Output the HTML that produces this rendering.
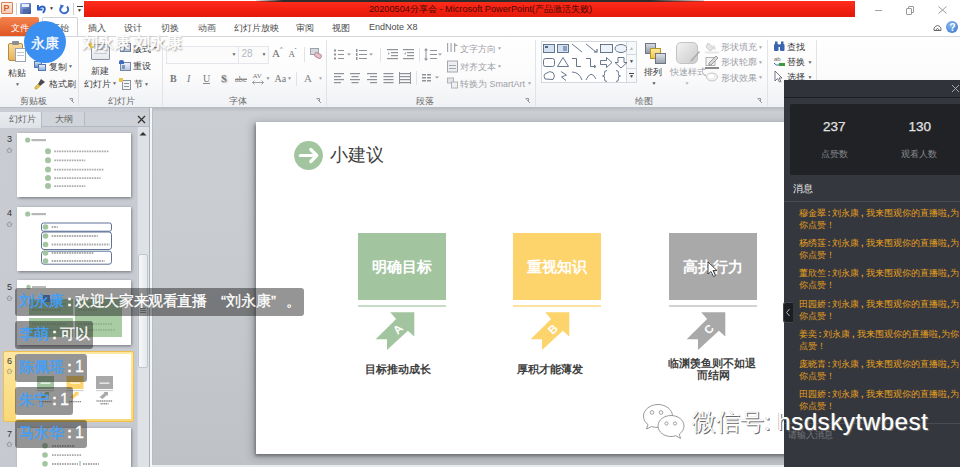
<!DOCTYPE html>
<html><head><meta charset="utf-8">
<style>
*{margin:0;padding:0;box-sizing:border-box}
html,body{width:960px;height:467px;overflow:hidden;background:#fff;font-family:"Liberation Sans",sans-serif;position:relative}
.a{position:absolute}
.t{position:absolute;white-space:nowrap;line-height:1}
.s9{font-size:9px}
.tab{font-size:9px;color:#4b4b4b;top:23.5px}
.sep{top:40px;width:1px;height:66px;background:#e0e3e7}
.gl{font-size:9px;color:#6a6a6a;top:97px}
.rl{font-size:9px;color:#3c3c3c}
.dim{color:#9ea1a6}
.dd{font-size:5px;color:#666}
.thumb{position:absolute;left:17px;width:114px;background:#fff;box-shadow:0.5px 1px 3px rgba(0,0,0,.45)}
.num{font-size:9px;color:#333;left:7px}
.star{font-size:8px;color:#555;left:6px}
.bub{position:absolute;left:15px;height:27.5px;-webkit-text-stroke-width:0.35px;background:rgba(30,30,30,.47);border-radius:3px;font-size:15px;color:#fff;line-height:26.3px;padding-left:4px;white-space:nowrap;text-shadow:0 0 1px rgba(0,0,0,.35)}
.bub b{font-weight:normal;color:#3fa0fa;text-shadow:none}
.bub u{text-decoration:none;font-size:16px}
.bub i{font-style:normal;word-spacing:-1.2px;font-weight:bold}
.fw{display:inline-block;width:15px}
.msg{position:absolute;left:15px;width:165px;font-size:8.9px;line-height:12px;color:#e9a11e}
.p{display:inline-block;width:6px;text-align:center;font-weight:bold}
</style></head><body>

<!-- ===== Title bar ===== -->
<div class="a" style="left:1px;top:2px;width:11.5px;height:12px;background:linear-gradient(#fdebdf,#f6cdb2);border:1px solid #d9805a;border-radius:1px"></div>
<div class="t" style="left:3.5px;top:3.5px;font-size:9px;font-weight:bold;color:#d2602a">P</div>
<div class="a" style="left:16px;top:3px;width:1px;height:12px;background:#cfcfcf"></div>
<div class="a" style="left:20px;top:3px;width:11px;height:11px;background:linear-gradient(135deg,#9fb6ea,#2c4a9c);border-radius:1px"></div>
<div class="a" style="left:22px;top:4px;width:7px;height:3px;background:#e8edf7"></div>
<div class="a" style="left:23px;top:9px;width:5px;height:5px;background:#506aa8"></div>
<svg class="a" style="left:35px;top:3px" width="12" height="11"><path d="M3 2V6.5H7.5" fill="none" stroke="#2f63c6" stroke-width="2"/><path d="M3.5 6Q6 2.5 9 4Q11 6 8 10" fill="none" stroke="#2f63c6" stroke-width="2"/></svg>
<div class="t" style="left:49px;top:6px;font-size:5px;color:#333">▼</div>
<svg class="a" style="left:58px;top:3px" width="12" height="12"><path d="M9 3.5A4 4 0 1 1 4 3" fill="none" stroke="#3a6fd0" stroke-width="2"/><path d="M2 1.5L6 2.5L3.5 6Z" fill="#3a6fd0"/></svg>
<div class="a" style="left:73px;top:3px;width:1px;height:12px;background:#cfcfcf"></div>
<div class="a" style="left:77px;top:6px;width:6px;height:1px;background:#333"></div>
<div class="t" style="left:77px;top:8px;font-size:5px;color:#333">▼</div>
<div class="a" style="left:84px;top:1px;width:771px;height:16px;background:linear-gradient(#ff2d1c,#f01e0f 60%,#e21a0b)"></div>
<div class="a" style="left:256px;top:0;width:448px;height:2px;background:linear-gradient(90deg,rgba(50,40,40,.1),#2e2b2b 6%,#2e2b2b 88%,rgba(50,40,40,.2))"></div>
<div class="t" style="left:369px;top:5px;font-size:9.2px;color:#4d0b04">20200504分享会 - Microsoft PowerPoint(产品激活失败)</div>
<div class="a" style="left:875px;top:10px;width:7px;height:1px;background:#a0a0a0"></div>
<div class="a" style="left:908px;top:6px;width:6px;height:7px;border:1px solid #9a9a9a;border-radius:1px"></div>
<div class="a" style="left:906px;top:8px;width:6px;height:7px;border:1px solid #9a9a9a;background:#fff;border-radius:1px"></div>
<svg class="a" style="left:938px;top:6px" width="9" height="8"><path d="M0.5 0.5L8.5 7.5M8.5 0.5L0.5 7.5" stroke="#8f8f8f" stroke-width="0.9"/></svg>

<!-- ===== Tabs ===== -->
<div class="a" style="left:0;top:17px;width:39px;height:20px;background:linear-gradient(#f3834f,#df5420);border-radius:2px 2px 0 0"></div>
<div class="t" style="left:11px;top:23.5px;font-size:9px;color:#fff">文件</div>
<div class="a" style="left:42px;top:17px;width:36px;height:21px;background:#fff;border:1px solid #cfd3d8;border-bottom:none;border-radius:2px 2px 0 0"></div>
<div class="t tab" style="left:51px">开始</div>
<div class="t tab" style="left:87.5px">插入</div>
<div class="t tab" style="left:124px">设计</div>
<div class="t tab" style="left:160.5px">切换</div>
<div class="t tab" style="left:197.5px">动画</div>
<div class="t tab" style="left:234px">幻灯片放映</div>
<div class="t tab" style="left:296px">审阅</div>
<div class="t tab" style="left:332px">视图</div>
<div class="t tab" style="left:369px;top:23px;font-size:9px">EndNote X8</div>
<svg class="a" style="left:933px;top:23.5px" width="9" height="8"><path d="M1 6.5Q0.5 2.5 4.5 1.5Q8.5 2.5 8 6.5Z" fill="none" stroke="#666" stroke-width="1"/><path d="M2.5 6.3L4.5 4.3L6.5 6.3" fill="none" stroke="#666" stroke-width="1"/></svg>
<div class="a" style="left:946px;top:21px;width:12px;height:12px;border-radius:50%;background:radial-gradient(circle at 40% 35%,#8cbcf2,#2f6ec9)"></div>
<div class="t" style="left:949.5px;top:22.5px;font-size:10px;font-weight:bold;color:#fff">?</div>

<!-- ===== Ribbon ===== -->
<div class="a" style="left:0;top:36px;width:960px;height:72px;background:linear-gradient(#ffffff,#fbfbfc 55%,#eff1f4);border-top:1.5px solid #d3d7dc;border-bottom:1px solid #b6bcc4"></div>
<div class="a sep" style="left:78px"></div>
<div class="a sep" style="left:162px"></div>
<div class="a sep" style="left:326px"></div>
<div class="a sep" style="left:535px"></div>
<div class="a sep" style="left:767px"></div>
<div class="a sep" style="left:816px"></div>
<div class="t gl" style="left:19.5px">剪贴板</div>
<div class="t gl" style="left:108px">幻灯片</div>
<div class="t gl" style="left:229px">字体</div>
<div class="t gl" style="left:416px">段落</div>
<div class="t gl" style="left:635px">绘图</div>
<svg class="a" style="left:69px;top:98px" width="6" height="6"><path d="M0.5 0.5H3.5V3.5" fill="none" stroke="#999" stroke-width="1"/><path d="M1.5 1.5L5 5" stroke="#999"/></svg>
<svg class="a" style="left:316px;top:98px" width="6" height="6"><path d="M0.5 0.5H3.5V3.5" fill="none" stroke="#999" stroke-width="1"/><path d="M1.5 1.5L5 5" stroke="#999"/></svg>
<svg class="a" style="left:525px;top:98px" width="6" height="6"><path d="M0.5 0.5H3.5V3.5" fill="none" stroke="#999" stroke-width="1"/><path d="M1.5 1.5L5 5" stroke="#999"/></svg>
<svg class="a" style="left:757px;top:98px" width="6" height="6"><path d="M0.5 0.5H3.5V3.5" fill="none" stroke="#999" stroke-width="1"/><path d="M1.5 1.5L5 5" stroke="#999"/></svg>

<!-- clipboard -->
<div class="a" style="left:8px;top:43px;width:15px;height:18px;background:linear-gradient(#f9dca0,#e8b25a);border:1px solid #b98a3a;border-radius:2px"></div>
<div class="a" style="left:12px;top:41px;width:7px;height:4px;background:#8a8f96;border-radius:1px"></div>
<div class="a" style="left:15px;top:48px;width:11px;height:14px;background:#fff;border:1px solid #9aa3ad"></div>
<div class="a" style="left:17px;top:52px;width:7px;height:1px;background:#c0c5cb"></div>
<div class="a" style="left:17px;top:55px;width:7px;height:1px;background:#c0c5cb"></div>
<div class="t rl" style="left:8px;top:68.8px">粘贴</div>
<div class="t dd" style="left:15px;top:81.5px">▼</div>
<div class="a" style="left:34px;top:61px;width:8px;height:7px;background:linear-gradient(#cfe0f5,#6d93cc);border:1px solid #5577aa"></div>
<div class="a" style="left:38px;top:64px;width:8px;height:7px;background:linear-gradient(#e6effa,#8fb0dd);border:1px solid #5577aa"></div>
<div class="t rl" style="left:48.5px;top:62.9px">复制</div>
<div class="t dd" style="left:68px;top:64px">▼</div>
<svg class="a" style="left:34px;top:78px" width="12" height="12"><path d="M7 1L11 4L6 8L4 6Z" fill="#4b4b4b"/><path d="M4 6L6 8L3 11L1 11L1 9Z" fill="#e7c34a" stroke="#b8952a" stroke-width=".6"/></svg>
<div class="t rl" style="left:48.5px;top:80.2px">格式刷</div>

<!-- slides group -->
<div class="a" style="left:91px;top:44px;width:19px;height:16px;background:linear-gradient(#fff,#e4e8ec);border:1px solid #8d96a0;border-radius:1px"></div><div class="a" style="left:92px;top:45px;width:17px;height:3px;background:#c7d3e6"></div>
<div class="a" style="left:94px;top:48px;width:13px;height:2px;background:#b5bcc5"></div>
<div class="a" style="left:94px;top:53px;width:13px;height:1px;background:#c5cad1"></div>
<div class="a" style="left:89px;top:43px;width:5px;height:5px;background:#f2c94c;transform:rotate(45deg)"></div>
<div class="t rl" style="left:90.5px;top:66.5px">新建</div>
<div class="t rl" style="left:84px;top:79.7px">幻灯片</div>
<div class="t dd" style="left:112px;top:81px">▼</div>
<div class="a" style="left:120px;top:43px;width:11px;height:9px;background:linear-gradient(#eef2f8,#b9c7dc);border:1px solid #6f86ad"></div><div class="a" style="left:122px;top:45px;width:3px;height:5px;background:#7f95bb"></div>
<div class="t rl" style="left:133px;top:44.7px">版式</div>
<div class="t dd" style="left:153px;top:46px">▼</div>
<div class="a" style="left:120px;top:62px;width:11px;height:9px;background:linear-gradient(#eef2f8,#b9c7dc);border:1px solid #6f86ad"></div><div class="a" style="left:122px;top:65px;width:3px;height:4px;background:#7f95bb"></div>
<div class="a" style="left:119px;top:60px;width:5px;height:4px;background:#3d6bbf;border-radius:2px 2px 0 0"></div>
<div class="t rl" style="left:133px;top:62px">重设</div>
<div class="a" style="left:122px;top:80px;width:9px;height:10px;background:#f3f4f6;border:1px solid #8a929c"></div>
<div class="a" style="left:124px;top:83px;width:5px;height:1px;background:#8a929c"></div>
<div class="a" style="left:124px;top:86px;width:5px;height:1px;background:#8a929c"></div>
<div class="a" style="left:119px;top:78px;width:4px;height:4px;background:#e9c64a"></div>
<div class="t rl" style="left:133.5px;top:80px">节</div>
<div class="t dd" style="left:144px;top:82px">▼</div>

<!-- font group -->
<div class="a" style="left:166px;top:46px;width:73px;height:18px;background:#fbfbfc;border:1px solid #e3e6ea"></div>
<div class="t dd" style="left:231.5px;top:51.5px">▼</div>
<div class="a" style="left:238px;top:46px;width:31px;height:18px;background:#fbfbfc;border:1px solid #e3e6ea"></div>
<div class="t" style="left:241.5px;top:49px;font-size:10px;color:#b4b8bd">28</div>
<div class="t dd" style="left:261.5px;top:51.5px">▼</div>
<div class="t" style="left:272px;top:48px;font-size:11px;font-family:'Liberation Serif',serif;color:#707070">A</div>
<div class="t" style="left:280px;top:46px;font-size:6px;color:#707070">^</div>
<div class="t" style="left:288.5px;top:50px;font-size:9px;font-family:'Liberation Serif',serif;color:#707070">A</div>
<div class="t" style="left:294.5px;top:47px;font-size:6px;color:#707070">ˇ</div>
<div class="a" style="left:304px;top:47px;width:1px;height:15px;background:#dfe2e6"></div>
<div class="a" style="left:310px;top:48px;width:9px;height:7px;background:#d5d9de;border:1px solid #9aa2ac"></div>
<div class="a" style="left:314px;top:53px;width:8px;height:5px;background:#e7c0ca;border:1px solid #b9909a;border-radius:2px;transform:rotate(30deg)"></div>
<div class="t" style="left:170px;top:73.5px;font-size:10px;font-weight:bold;font-family:'Liberation Serif',serif;color:#777">B</div>
<div class="t" style="left:187px;top:73.5px;font-size:10px;font-style:italic;font-family:'Liberation Serif',serif;color:#777">I</div>
<div class="t" style="left:203px;top:73.5px;font-size:10px;font-family:'Liberation Serif',serif;color:#777">U</div>
<div class="a" style="left:203px;top:83px;width:7px;height:1px;background:#888"></div>
<div class="t" style="left:221px;top:73.5px;font-size:10px;font-weight:bold;font-family:'Liberation Serif',serif;color:#777;text-shadow:1px 1px 1px #999">S</div>
<div class="t" style="left:235px;top:74.5px;font-size:8.5px;font-family:'Liberation Serif',serif;color:#777">abc</div>
<div class="a" style="left:235px;top:79px;width:12px;height:1px;background:#888"></div>
<div class="t" style="left:252.5px;top:72.5px;font-size:7px;font-family:'Liberation Serif',serif;color:#777">AV</div>
<svg class="a" style="left:252px;top:80px" width="12" height="5"><path d="M0.5 2.5H11.5M0.5 2.5L2.5 0.5M0.5 2.5L2.5 4.5M11.5 2.5L9.5 0.5M11.5 2.5L9.5 4.5" stroke="#888" stroke-width=".8" fill="none"/></svg>
<div class="t dd" style="left:265.5px;top:76px;color:#999">▼</div>
<div class="t" style="left:274.5px;top:73.5px;font-size:10px;font-family:'Liberation Serif',serif;color:#777">Aa</div>
<div class="t dd" style="left:287px;top:76px;color:#999">▼</div>
<div class="a" style="left:296px;top:72px;width:1px;height:14px;background:#dfe2e6"></div>
<div class="t" style="left:304px;top:72.5px;font-size:11px;font-family:'Liberation Serif',serif;color:#8a8a8a">A</div>
<div class="t dd" style="left:318px;top:76px;color:#aaa">▼</div>

<!-- paragraph group -->
<svg class="a" style="left:333px;top:48px" width="112" height="40">
 <g fill="#8f9298">
  <rect x="1" y="1.5" width="2" height="2"/><rect x="5" y="2" width="6" height="1"/>
  <rect x="1" y="5.5" width="2" height="2"/><rect x="5" y="6" width="6" height="1"/>
  <rect x="1" y="9.5" width="2" height="2"/><rect x="5" y="10" width="6" height="1"/>
  <rect x="23" y="1" width="1.5" height="3"/><rect x="26" y="2" width="8" height="1"/>
  <rect x="23" y="5" width="1.5" height="3"/><rect x="26" y="6" width="8" height="1"/>
  <rect x="23" y="9" width="1.5" height="3"/><rect x="26" y="10" width="8" height="1"/>
  <rect x="54" y="1" width="11" height="1.2"/><rect x="58" y="4" width="7" height="1.2"/><rect x="58" y="7" width="7" height="1.2"/><rect x="54" y="10" width="11" height="1.2"/>
  <rect x="70" y="1" width="11" height="1.2"/><rect x="74" y="4" width="7" height="1.2"/><rect x="74" y="7" width="7" height="1.2"/><rect x="70" y="10" width="11" height="1.2"/>
  <rect x="97" y="2" width="7" height="1"/><rect x="97" y="6" width="7" height="1"/><rect x="97" y="10" width="7" height="1"/>
  <path d="M93 0L95 2.5H91Z M93 13L95 10.5H91Z"/><rect x="92.5" y="2" width="1" height="9"/>
 </g>
 <g fill="#b0b3b8"><path d="M55 4L57 5.5L55 7Z"/><path d="M71 5.5L73 4V7Z"/></g>
 <g fill="#999" font-size="5"><path d="M14 5.5H18L16 7.5Z"/><path d="M36 5.5H40L38 7.5Z"/><path d="M105 5.5H109L107 7.5Z"/></g>
 <rect x="47" y="0" width="1" height="14" fill="#dfe2e6"/><rect x="86" y="0" width="1" height="14" fill="#dfe2e6"/>
 <g fill="#8f9298">
  <rect x="1" y="25" width="10" height="1.2"/><rect x="1" y="28" width="7" height="1.2"/><rect x="1" y="31" width="10" height="1.2"/><rect x="1" y="34" width="7" height="1.2"/>
  <rect x="17" y="25" width="10" height="1.2"/><rect x="18.5" y="28" width="7" height="1.2"/><rect x="17" y="31" width="10" height="1.2"/><rect x="18.5" y="34" width="7" height="1.2"/>
  <rect x="34" y="25" width="10" height="1.2"/><rect x="37" y="28" width="7" height="1.2"/><rect x="34" y="31" width="10" height="1.2"/><rect x="37" y="34" width="7" height="1.2"/>
  <rect x="50.5" y="25" width="10" height="1.2"/><rect x="50.5" y="28" width="10" height="1.2"/><rect x="50.5" y="31" width="10" height="1.2"/><rect x="50.5" y="34" width="10" height="1.2"/>
  <rect x="66" y="25" width="12" height="1.2"/><rect x="66" y="28" width="12" height="1.2"/><rect x="66" y="31" width="12" height="1.2"/><rect x="66" y="34" width="12" height="1.2"/><rect x="66" y="24" width="1" height="12"/><rect x="77" y="24" width="1" height="12"/>
  <rect x="89" y="26" width="4" height="1.5"/><rect x="94" y="26" width="4" height="1.5"/><rect x="89" y="29" width="4" height="1.5"/><rect x="94" y="29" width="4" height="1.5"/><rect x="89" y="32" width="4" height="1.5"/><rect x="94" y="32" width="4" height="1.5"/>
 </g>
 <path d="M102 28.5H106L104 30.5Z" fill="#999"/>
 <rect x="83" y="23" width="1" height="14" fill="#dfe2e6"/>
</svg>
<svg class="a" style="left:446px;top:42px" width="13" height="48">
 <g fill="#a3a7ad"><rect x="1" y="1" width="1.2" height="9"/><rect x="4.5" y="1" width="1.2" height="9"/><rect x="8" y="1" width="1.2" height="9"/><path d="M10 2L12 4H8Z"/></g>
 <rect x="1.5" y="19" width="10" height="11" fill="#eceef1" stroke="#a3a7ad"/><rect x="3" y="23" width="7" height="1" fill="#a3a7ad"/><rect x="3" y="26" width="7" height="1" fill="#a3a7ad"/>
 <rect x="1.5" y="36" width="6" height="5" fill="#e3e5e8" stroke="#b0b4ba"/><rect x="5.5" y="40" width="6" height="6" fill="#eef0f2" stroke="#b0b4ba"/>
</svg>
<div class="t rl dim" style="left:460px;top:44.8px">文字方向</div><div class="t dd" style="left:497px;top:46px;color:#aaa">▼</div>
<div class="t rl dim" style="left:460px;top:62.5px">对齐文本</div><div class="t dd" style="left:497px;top:64px;color:#aaa">▼</div>
<div class="t rl dim" style="left:460px;top:79.7px">转换为 SmartArt</div><div class="t dd" style="left:527px;top:81px;color:#aaa">▼</div>

<!-- drawing group -->
<div class="a" style="left:541px;top:41px;width:96px;height:42px;background:#fff;border:1px solid #d3d8de"></div>
<div class="a" style="left:626px;top:41px;width:11px;height:42px;border:1px solid #d3d8de;background:#f7f8fa"></div>
<div class="a" style="left:626px;top:54px;width:11px;height:1px;background:#d3d8de"></div>
<div class="a" style="left:626px;top:68px;width:11px;height:1px;background:#d3d8de"></div>
<div class="t" style="left:629px;top:46px;font-size:5px;color:#bbb">▲</div>
<div class="t" style="left:629px;top:59px;font-size:5px;color:#444">▼</div>
<div class="a" style="left:629px;top:73px;width:5px;height:1px;background:#444"></div>
<div class="t" style="left:629px;top:74px;font-size:5px;color:#444">▼</div>
<svg class="a" style="left:541px;top:41px" width="86" height="42">
 <g fill="none" stroke="#56687f" stroke-width="0.9">
  <rect x="2.5" y="3.5" width="11" height="8" fill="#d4e1f2"/><rect x="4" y="5" width="3" height="2" fill="#56687f" stroke="none"/><rect x="16.5" y="3.5" width="11" height="8" fill="#d4e1f2"/><rect x="22" y="5" width="4" height="5" fill="#8aa0bf" stroke="none"/>
  <line x1="31" y1="3" x2="41" y2="11"/><line x1="45" y1="3" x2="55" y2="11"/><path d="M53 11H56V8" stroke-width="1.1"/>
  <rect x="59.5" y="3.5" width="12" height="8" fill="#eef3fa"/><ellipse cx="80" cy="7.5" rx="6" ry="4" fill="#eef3fa"/>
  <rect x="2.5" y="17.5" width="11" height="8" rx="2"/><path d="M16.5 25.5L22 16.5L27.5 25.5Z"/>
  <path d="M31 17.5H35.5V25.5H40"/><path d="M45 17.5H49.5V25.5H54"/><path d="M53 24L55 25.5L53 27"/>
  <path d="M59.5 19.5H65.5V16.5L71 21.5L65.5 26.5V23.5H59.5Z"/><path d="M77 16.5H83V21.5H86L80 27L74 21.5H77Z"/>
  <path d="M4 38Q1.5 33 6 32Q8 29.5 12 31.5Q15 35 12 38.5Z"/><path d="M20 30.5L25.5 34L20.5 36L25 39.5"/>
  <path d="M31 31Q38 31 41 39"/><path d="M45 39Q50 28 55 38"/>
  <path d="M66 29.5Q63 29.5 63.5 32.5L63.5 34Q63.5 35 61.5 35Q63.5 35 63.5 36L63.5 37.5Q63 40.5 66 40.5"/><path d="M75 29.5Q78 29.5 77.5 32.5L77.5 34Q77.5 35 79.5 35Q77.5 35 77.5 36L77.5 37.5Q78 40.5 75 40.5"/>
 </g>
</svg>
<div class="a" style="left:645px;top:43px;width:11px;height:11px;background:linear-gradient(#d5dae0,#8f98a3);border:1px solid #6c7580"></div>
<div class="a" style="left:650px;top:48px;width:11px;height:11px;background:linear-gradient(#fde9a0,#f3c63c);border:1px solid #b8952a"></div>
<div class="a" style="left:655px;top:53px;width:11px;height:11px;background:linear-gradient(#dde1e6,#9aa3ad);border:1px solid #6c7580"></div>
<div class="t rl" style="left:644px;top:68px;color:#333">排列</div>
<div class="t dd" style="left:651.5px;top:81px;color:#555">▼</div>
<div class="a" style="left:676px;top:42px;width:22px;height:22px;border-radius:5px;background:linear-gradient(135deg,#f2f2f2,#cbcbcb);border:1px solid #c3c3c3"></div>
<svg class="a" style="left:685px;top:50px" width="16" height="16"><path d="M14 1L6 10L5 12L7 11L15 2Z" fill="#a9a9a9"/></svg>
<div class="t rl dim" style="left:670px;top:68px">快速样式</div>
<div class="t dd" style="left:684.5px;top:81px;color:#bbb">▼</div>
<svg class="a" style="left:704px;top:41px" width="16" height="46">
 <path d="M4 2L10 7L6 10L2 6Z" fill="#e4e4e4" stroke="#bdbdbd" stroke-width=".7"/><path d="M9 4Q12 7 11 9" fill="none" stroke="#cfcfcf"/><rect x="1" y="10.5" width="14" height="2" fill="#e7e7e7"/>
 <rect x="2" y="16.5" width="9" height="8" fill="#f4f4f4" stroke="#a0a0a0" stroke-width=".8"/><path d="M12 15L14 17L7 24L5 24L5 22Z" fill="#d9d9d9" stroke="#8a8a8a" stroke-width=".8"/><rect x="1" y="26" width="14" height="2" fill="#8a8a8a"/>
 <ellipse cx="8" cy="36" rx="5.5" ry="4" fill="#f0f0f0" stroke="#c8c8c8"/><ellipse cx="7" cy="35" rx="3" ry="2" fill="#fff"/>
</svg>
<div class="t rl dim" style="left:721px;top:43px">形状填充</div><div class="t dd" style="left:758px;top:44.5px;color:#aaa">▼</div>
<div class="t rl dim" style="left:721px;top:58px">形状轮廓</div><div class="t dd" style="left:758px;top:59.5px;color:#aaa">▼</div>
<div class="t rl dim" style="left:721px;top:73.5px">形状效果</div><div class="t dd" style="left:758px;top:75px;color:#aaa">▼</div>
<svg class="a" style="left:773px;top:41px" width="13" height="42">
 <g fill="#3864b0"><rect x="1" y="3" width="4.5" height="7" rx="1"/><rect x="7" y="3" width="4.5" height="7" rx="1"/><rect x="2" y="0.5" width="2.5" height="3"/><rect x="8" y="0.5" width="2.5" height="3"/><rect x="4.5" y="3.5" width="3" height="2.5"/></g>
 <text x="1" y="20" font-size="6" fill="#666" font-family="Liberation Sans">ab</text><path d="M1 22Q3 25 6 24" fill="none" stroke="#3864b0" stroke-width="1"/><rect x="6" y="22" width="6" height="3" fill="#3c9a3c"/>
 <path d="M2 30L2 40L4.5 37.5L6.5 41L8 40.5L6 37L9 37Z" fill="#fff" stroke="#556" stroke-width=".8"/>
</svg>
<div class="t rl" style="left:787px;top:43px;color:#333">查找</div>
<div class="t rl" style="left:787px;top:58px;color:#333">替换</div><div class="t dd" style="left:807.5px;top:59.5px">▼</div>
<div class="t rl" style="left:787px;top:73px;color:#333">选择</div><div class="t dd" style="left:807.5px;top:74.5px">▼</div>

<!-- ===== Workspace ===== -->
<div class="a" style="left:0;top:108px;width:960px;height:359px;background:linear-gradient(#b9bdc2,#cbced3 4px,#c8cbd0 40%,#bec2c6)"></div>
<div class="a" style="left:0;top:108px;width:149px;height:359px;background:linear-gradient(#c9cdd3,#c6cad0)"></div>
<div class="a" style="left:149px;top:108px;width:1px;height:359px;background:#a9afb7"></div>
<div class="a" style="left:150px;top:108px;width:2px;height:359px;background:#f4f5f7"></div>
<div class="a" style="left:152px;top:108px;width:1px;height:359px;background:#b8bdc3"></div>
<div class="a" style="left:152px;top:465px;width:808px;height:2px;background:#e9ebee"></div>
<!-- panel tabs -->
<div class="a" style="left:0;top:112px;width:149px;height:15px;background:#cdd1d7;border-bottom:1px solid #b4bac2"></div>
<div class="a" style="left:0;top:112px;width:42px;height:16px;background:linear-gradient(#e9ecf0,#dfe3e8);border-right:1px solid #b4bac2"></div>
<div class="a" style="left:42px;top:112px;width:43px;height:14px;border-right:1px solid #b4bac2;background:#d1d5db"></div>
<div class="t" style="left:8.5px;top:115px;font-size:8.5px;color:#666">幻灯片</div>
<div class="t" style="left:55px;top:115px;font-size:8.5px;color:#666">大纲</div>
<svg class="a" style="left:137px;top:115px" width="9" height="9"><path d="M1 1L8 8M8 1L1 8" stroke="#333" stroke-width="1.3"/></svg>
<!-- scrollbar -->
<div class="a" style="left:137px;top:127px;width:12px;height:340px;background:#dee2e7;border-left:1px solid #cfd4da"></div>
<svg class="a" style="left:139px;top:131px" width="8" height="5"><path d="M0.5 4.5L4 1L7.5 4.5Z" fill="#333"/></svg>
<div class="a" style="left:138px;top:254px;width:10px;height:114px;background:linear-gradient(90deg,#f7f8fa,#e4e8ec);border:1px solid #c0c6cd;border-radius:2px"></div>
<div class="a" style="left:140px;top:308px;width:6px;height:1px;background:#8a9098"></div>
<div class="a" style="left:140px;top:310px;width:6px;height:1px;background:#8a9098"></div>
<div class="a" style="left:140px;top:312px;width:6px;height:1px;background:#8a9098"></div>

<!-- thumbnails -->
<div class="t num" style="top:134.5px">3</div>
<div class="t star" style="top:147px">✩</div>
<div class="thumb" style="top:132.5px;height:64.5px">
 <svg width="114" height="65">
  <circle cx="10.7" cy="7" r="2.6" fill="#a2c5a0"/><g fill="#9a9a9a" opacity=".7"><rect x="14.5" y="6" width="14.5" height="2.2"/></g>
  <g fill="#a2c5a0"><circle cx="31" cy="18.3" r="3"/><circle cx="31" cy="27.3" r="3"/><circle cx="31" cy="36.5" r="3"/><circle cx="31" cy="45" r="3"/><circle cx="31" cy="53" r="3"/></g>
  <g stroke="#a8a8a8" stroke-width="1.8" stroke-dasharray="1.6 0.9"><line x1="37.3" y1="18.4" x2="91.7" y2="18.4"/><line x1="37.3" y1="27.4" x2="68.3" y2="27.4"/><line x1="37.3" y1="36.6" x2="87.0" y2="36.6"/><line x1="37.3" y1="45.1" x2="83.6" y2="45.1"/><line x1="37.3" y1="53.1" x2="68.3" y2="53.1"/></g>
 </svg>
</div>
<div class="t num" style="top:208.5px">4</div>
<div class="t star" style="top:221px">✩</div>
<div class="thumb" style="top:206.5px;height:64.5px">
 <svg width="114" height="65">
  <circle cx="10.7" cy="7" r="2.6" fill="#a2c5a0"/><g fill="#9a9a9a" opacity=".7"><rect x="14.5" y="6" width="14.5" height="2.2"/></g>
  <g fill="none" stroke="#4d628c" stroke-width="0.9"><rect x="24.5" y="16" width="70" height="8.2" rx="2"/><rect x="24.5" y="25" width="70" height="17.5" rx="2.5"/><rect x="24.5" y="44.2" width="70" height="13" rx="2.5"/></g>
  <g fill="#a2c5a0"><circle cx="28.5" cy="20" r="2.8"/><circle cx="28.5" cy="29" r="2.8"/><circle cx="28.5" cy="37.5" r="2.8"/><circle cx="28.5" cy="46" r="2.8"/><circle cx="28.5" cy="54" r="2.8"/></g>
  <g stroke="#a8a8a8" stroke-width="1.8" stroke-dasharray="1.6 0.9"><line x1="34.7" y1="20.0" x2="40.7" y2="20.0"/><line x1="34.7" y1="29.0" x2="80.7" y2="29.0"/><line x1="34.7" y1="37.5" x2="92.7" y2="37.5"/><line x1="34.7" y1="46.0" x2="77.2" y2="46.0"/><line x1="34.7" y1="54.0" x2="87.7" y2="54.0"/></g>
 </svg>
</div>
<div class="t num" style="top:282.5px">5</div>
<div class="t star" style="top:295px">✩</div>
<div class="thumb" style="top:280px;height:65px">
 <svg width="114" height="65">
  <circle cx="11.5" cy="7" r="2.2" fill="#a2c5a0"/><rect x="15" y="6" width="14" height="2" fill="#b8b8b8"/>
  <rect x="12" y="19" width="44" height="38" fill="#a9cca5"/><rect x="58" y="19" width="47" height="38" fill="#a9cca5"/><g stroke="#7a9a78" stroke-width="1" stroke-dasharray="1.5 1"><line x1="15" y1="24" x2="50" y2="24"/><line x1="15" y1="30" x2="45" y2="30"/><line x1="15" y1="44" x2="50" y2="44"/><line x1="15" y1="50" x2="42" y2="50"/><line x1="61" y1="24" x2="100" y2="24"/><line x1="61" y1="30" x2="80" y2="30"/><line x1="61" y1="44" x2="95" y2="44"/><line x1="61" y1="50" x2="98" y2="50"/></g><rect x="12" y="35" width="44" height="3" fill="#fff"/>
  <rect x="26" y="15" width="7" height="7" fill="#5c8ed0"/>
 </svg>
</div>
<div class="a" style="left:3px;top:351px;width:131px;height:71px;background:linear-gradient(#fde7a2,#f9d877);border:1px solid #efc04a;border-radius:2px"></div>
<div class="t num" style="top:357px">6</div>
<div class="t star" style="top:368px">✩</div>
<div class="thumb" style="top:353.5px;height:65px;left:16px;width:115px;box-shadow:none">
 <svg width="115" height="65">
  <rect x="21" y="22" width="17" height="13" fill="#a2c5a0"/><rect x="50.5" y="22" width="17" height="13" fill="#fdd36b"/><rect x="80" y="22" width="17" height="13" fill="#a9a9a9"/>
  <g fill="#fff" opacity=".85"><rect x="24.5" y="28.5" width="10" height="1.3"/><rect x="54" y="28.5" width="10" height="1.3"/><rect x="83.5" y="28.5" width="10" height="1.3"/></g>
  <g fill="#bbb"><rect x="21" y="36.3" width="17" height="0.8"/><rect x="50.5" y="36.3" width="17" height="0.8"/><rect x="80" y="36.3" width="17" height="0.8"/></g>
  <path d="M24.5 43L29.5 39L28.5 38L33 38L33 42L32 41L27.5 45Z" fill="#a2c5a0"/><path d="M54 43L59 39L58 38L62.5 38L62.5 42L61.5 41L57 45Z" fill="#fdd36b"/><path d="M83.5 43L88.5 39L87.5 38L92 38L92 42L91 41L86.5 45Z" fill="#a9a9a9"/>
  <g stroke="#8a8a8a" stroke-width="1.4" stroke-dasharray="1.2 0.6"><line x1="23.5" y1="47.6" x2="35.5" y2="47.6"/><line x1="53" y1="47.6" x2="65" y2="47.6"/><line x1="80.5" y1="47" x2="96.5" y2="47"/><line x1="84.5" y1="49.8" x2="92.5" y2="49.8"/></g>
 </svg>
</div>
<div class="t num" style="top:429.5px">7</div>
<div class="t star" style="top:441px">✩</div>
<div class="thumb" style="top:428px;height:50px">
 <svg width="114" height="50">
  <g fill="#a2c5a0"><circle cx="28" cy="17.8" r="2.8"/><circle cx="28" cy="27" r="2.8"/><circle cx="28" cy="35.8" r="2.8"/></g>
  <g stroke="#a8a8a8" stroke-width="1.8" stroke-dasharray="1.6 0.9"><line x1="35.0" y1="18.0" x2="58.0" y2="18.0"/><line x1="35.0" y1="27.2" x2="65.0" y2="27.2"/><line x1="35.0" y1="36.0" x2="61.0" y2="36.0"/><line x1="66.0" y1="36.0" x2="82.0" y2="36.0"/></g><rect x="62.5" y="33" width="1" height="5" fill="#7fbf7f"/>
 </svg>
</div>

<!-- ===== Slide ===== -->
<div class="a" style="left:256px;top:122px;width:600px;height:332px;background:#fff;box-shadow:-1px 2px 3px rgba(0,0,0,.32),-2px 2px 9px 1px rgba(0,0,0,.22)">
 <svg class="a" style="left:38px;top:18.5px" width="29" height="29"><circle cx="14.5" cy="14.5" r="14.4" fill="#a2c5a0"/><path d="M6.3 14.5H22.8M16.8 8.5L22.8 14.5L16.8 20.5" fill="none" stroke="#fff" stroke-width="3.2" stroke-linecap="round" stroke-linejoin="round"/></svg>
 <div class="t" style="left:74px;top:23.8px;font-size:18px;color:#404040">小建议</div>
 <div class="a" style="left:102px;top:111px;width:88px;height:67px;background:#a2c5a0"></div>
 <div class="t" style="left:116px;top:136.8px;font-size:15px;font-weight:bold;color:#fff">明确目标</div>
 <div class="a" style="left:102px;top:183px;width:88px;height:2px;background:#c6dcc4"></div>
 <div class="a" style="left:257px;top:111px;width:88px;height:67px;background:#fdd36b"></div>
 <div class="t" style="left:271px;top:136.8px;font-size:15px;font-weight:bold;color:#fff">重视知识</div>
 <div class="a" style="left:257px;top:183px;width:88px;height:2px;background:#fde2a2"></div>
 <div class="a" style="left:413px;top:111px;width:88px;height:67px;background:#a9a9a9"></div>
 <div class="t" style="left:427px;top:136.8px;font-size:15px;font-weight:bold;color:#fff">高执行力</div>
 <div class="a" style="left:413px;top:183px;width:88px;height:2px;background:#d2d2d2"></div>
 <svg class="a" style="left:0;top:0" width="600" height="332">
  <path id="arr" d="M134.2 190.3L158.3 190.3L158.3 214.6L151.9 208.7L131 228L131 217.3L119.7 217.3L140.1 196.9Z" fill="#a2c5a0"/>
  <path d="M289.2 190.3L313.3 190.3L313.3 214.6L306.9 208.7L286 228L286 217.3L274.7 217.3L295.1 196.9Z" fill="#fdd36b"/>
  <path d="M445.2 190.3L469.3 190.3L469.3 214.6L462.9 208.7L442 228L442 217.3L430.7 217.3L451.1 196.9Z" fill="#a9a9a9"/>
  <g font-family="Liberation Sans" font-size="11.5" font-weight="bold" fill="#fff" text-anchor="middle">
   <text x="141.7" y="211.4" transform="rotate(-45 141.7 207.1)">A</text>
   <text x="296.7" y="211.4" transform="rotate(-45 296.7 207.1)">B</text>
   <text x="452.7" y="211.4" transform="rotate(-45 452.7 207.1)">C</text>
  </g>
 </svg>
 <div class="t" style="left:109px;top:241.8px;font-size:11.4px;font-weight:bold;color:#3f3f3f">目标推动成长</div>
 <div class="t" style="left:261px;top:241.8px;font-size:11.4px;font-weight:bold;color:#3f3f3f">厚积才能薄发</div>
 <div class="t" style="left:412px;top:235.8px;font-size:11.2px;font-weight:bold;color:#3f3f3f">临渊羡鱼则不如退</div>
 <div class="t" style="left:441px;top:247.8px;font-size:11.2px;font-weight:bold;color:#3f3f3f">而结网</div>
</div>

<!-- ===== Live panel ===== -->
<div class="a" style="left:784px;top:80px;width:176px;height:387px;background:#34373d">
 <div class="a" style="left:0;top:0;width:176px;height:18px;background:#30333a;border-bottom:1.5px solid #1c1d20"></div>
 <svg class="a" style="left:167px;top:4px" width="9" height="9"><path d="M1 1L8 8M8 1L1 8" stroke="#a8a8a8" stroke-width="1"/></svg>
 <div class="a" style="left:6px;top:24px;width:172px;height:71px;background:#212225;border-radius:2px"></div>
 <div class="t" style="left:39px;top:40px;font-size:13.5px;color:#e2e2e2;-webkit-text-stroke:0.25px #e2e2e2">237</div>
 <div class="t" style="left:124.5px;top:40px;font-size:13.5px;color:#e2e2e2;-webkit-text-stroke:0.25px #e2e2e2">130</div>
 <div class="t" style="left:36.5px;top:69.5px;font-size:9px;color:#8b8c90">点赞数</div>
 <div class="t" style="left:116.5px;top:69.5px;font-size:9px;color:#8b8c90">观看人数</div>
 <div class="t" style="left:9px;top:103.5px;font-size:10px;color:#ececec">消息</div>
 <div class="a" style="left:0;top:121px;width:176px;height:1px;background:#4a4c52"></div>
 <div class="msg" style="top:127px">穆金翠<span class="p">:</span>刘永康<span class="p" style="width:6.5px">,</span>我来围观你的直播啦<span class="p" style="width:3.5px">,</span>为你点赞！</div>
 <div class="msg" style="top:157px">杨绣莲<span class="p">:</span>刘永康<span class="p" style="width:6.5px">,</span>我来围观你的直播啦<span class="p" style="width:3.5px">,</span>为你点赞！</div>
 <div class="msg" style="top:187px">董欣竺<span class="p">:</span>刘永康<span class="p" style="width:6.5px">,</span>我来围观你的直播啦<span class="p" style="width:3.5px">,</span>为你点赞！</div>
 <div class="msg" style="top:217.5px">田园娇<span class="p">:</span>刘永康<span class="p" style="width:6.5px">,</span>我来围观你的直播啦<span class="p" style="width:3.5px">,</span>为你点赞！</div>
 <div class="msg" style="top:247.5px">姜奕<span class="p">:</span>刘永康<span class="p" style="width:6.5px">,</span>我来围观你的直播啦<span class="p" style="width:3.5px">,</span>为你点赞！</div>
 <div class="msg" style="top:278px">庞晓青<span class="p">:</span>刘永康<span class="p" style="width:6.5px">,</span>我来围观你的直播啦<span class="p" style="width:3.5px">,</span>为你点赞！</div>
 <div class="msg" style="top:308px">田园娇<span class="p">:</span>刘永康<span class="p" style="width:6.5px">,</span>我来围观你的直播啦<span class="p" style="width:3.5px">,</span>为你点赞！</div>
 <div class="a" style="left:0;top:343px;width:176px;height:1px;background:#4a4c52"></div>
 <div class="t" style="left:4px;top:350.5px;font-size:9px;color:#76787d">请输入消息</div>
</div>
<div class="a" style="left:783px;top:302px;width:10px;height:21px;background:#1d1e21;border:1px solid #45474c;border-right:none;border-radius:3px 0 0 3px"></div>
<svg class="a" style="left:785px;top:308px" width="6" height="9"><path d="M4.5 1L1.5 4.5L4.5 8" fill="none" stroke="#b5b5b5" stroke-width="1"/></svg>

<!-- ===== Overlays ===== -->
<div class="a" style="left:23.5px;top:21px;width:42px;height:42px;border-radius:50%;background:#3b8ff0"></div>
<div class="t" style="left:30.5px;top:35.5px;font-size:14px;color:#fff;-webkit-text-stroke:0.3px #fff">永康</div>
<div class="t" style="left:82px;top:34.5px;font-size:15.5px;color:#fff;-webkit-text-stroke:0.5px #fff;text-shadow:1px 1px 2px rgba(0,0,0,.5)">刘永康 刘永康</div>

<div class="bub" style="top:288px;width:288.5px"><b>刘永康</b><i> : </i><span style="letter-spacing:-0.35px">欢迎大家来观看直播</span> <span class="fw" style="text-align:right">“</span>刘永康<span class="fw">”</span>。</div>
<div class="bub" style="top:321px;width:78px"><b>李萌</b><i> : </i>可以</div>
<div class="bub" style="top:354px;width:72px"><b>陈佩瑶</b><i> : </i><u>1</u></div>
<div class="bub" style="top:387px;width:58px"><b>朱宁</b><i> : </i><u>1</u></div>
<div class="bub" style="top:420px;width:72px"><b>马水华</b><i> : </i><u>1</u></div>

<!-- watermark -->
<svg class="a" style="left:641px;top:402px" width="46" height="40">
 <g fill="#fff" stroke="#8f8f8f" stroke-width="0.9">
  <path d="M17 2.5C9.5 2.5 2.5 7.5 2.5 14C2.5 17.5 4 20.5 7 22.5L5.5 27L10.5 24.5C12.5 25.2 14.5 25.5 17 25.5C24.5 25.5 31.5 20.5 31.5 14C31.5 7.5 24.5 2.5 17 2.5Z"/>
  <path d="M30 13.5C23 13.5 17 18 17 24C17 30 23 34.5 30 34.5C31.8 34.5 33.3 34.2 34.8 33.7L39.5 36.5L38.3 32.2C41.3 30 43 27 43 24C43 18 37 13.5 30 13.5Z"/>
 </g>
 <g fill="#fff" stroke="#8a8a8a" stroke-width="0.8"><circle cx="11" cy="10.5" r="1.8"/><circle cx="20" cy="10.5" r="1.8"/><circle cx="25.5" cy="21.5" r="1.6"/><circle cx="34" cy="21.5" r="1.6"/></g>
</svg>
<div class="t" style="left:692px;top:409.5px;font-size:24px;color:#fff;text-shadow:1px 1px 0 #6a6a6a,-0.5px 0 0 #aaa">微信号: <span style="letter-spacing:0.6px">hsdskytwbest</span></div>

<!-- cursor -->
<svg class="a" style="left:707px;top:260.5px" width="11" height="17"><path d="M1 1L1 13L4 10.5L6.5 15.5L8.5 14.5L6 9.5L10 9.5Z" fill="#fff" stroke="#333" stroke-width="0.9"/></svg>

</body></html>
